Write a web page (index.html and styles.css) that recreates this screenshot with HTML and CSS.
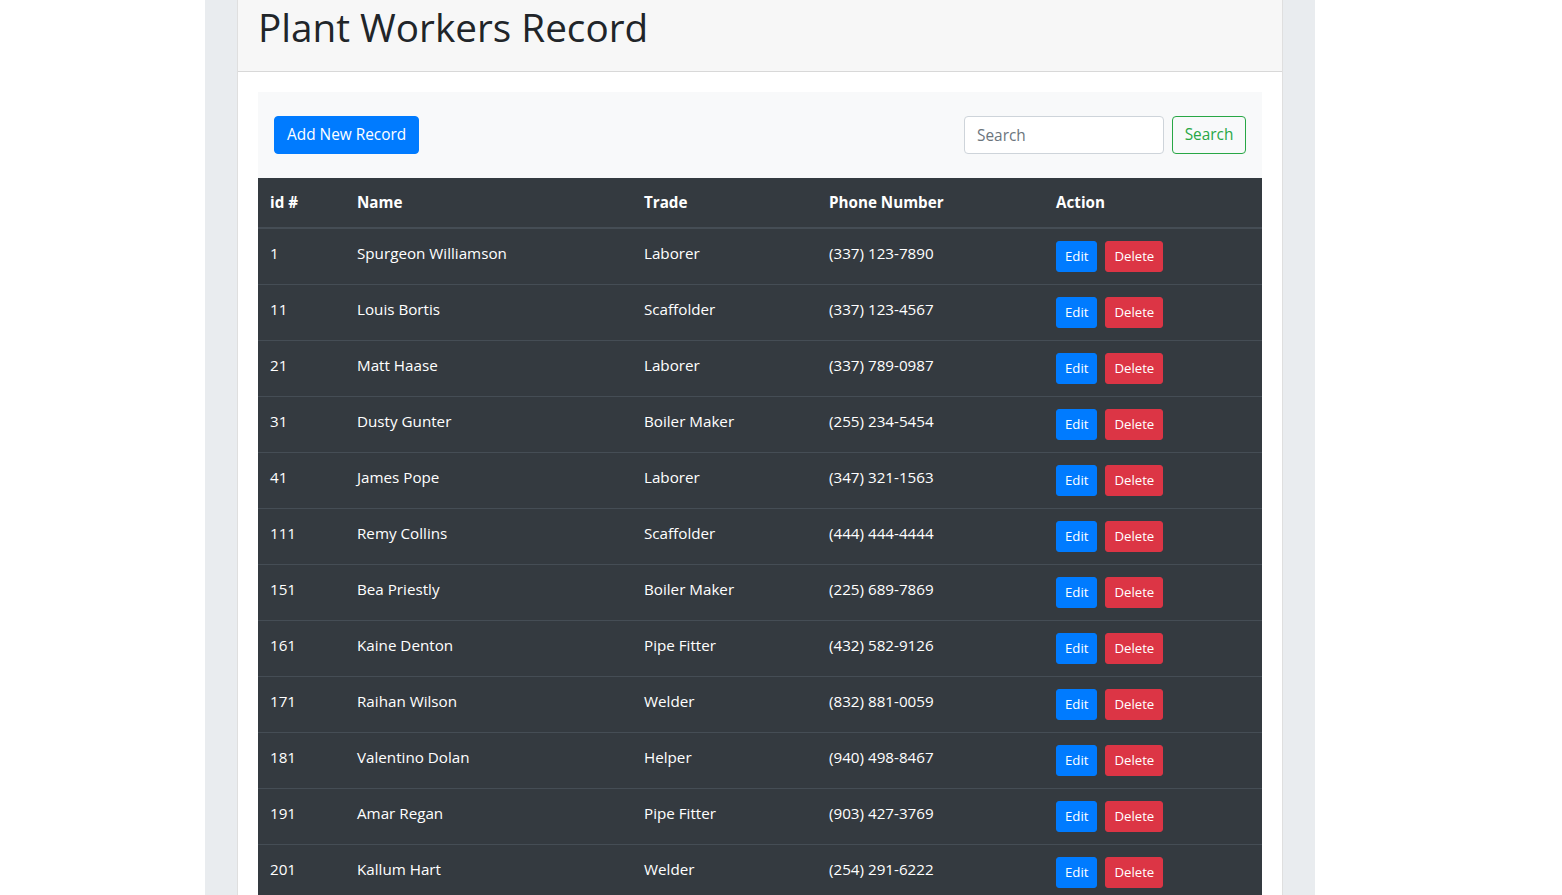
FILE: index.html
```html
<!DOCTYPE html>
<html lang="en">
<head>
<meta charset="utf-8">
<title>Plant Workers Record</title>
<link rel="stylesheet" href="styles.css">
</head>
<body>
<div class="page">
  <div class="jumbo">
    <div class="card">
      <div class="card-header">
        <h1 class="title">Plant Workers Record</h1>
      </div>
      <div class="card-body">
        <nav class="toolbar">
          <button class="btn btn-primary">Add New Record</button>
          <form class="search-form">
            <input class="search-input" type="search" placeholder="Search">
            <button class="btn btn-outline-success" type="button">Search</button>
          </form>
        </nav>
        <table class="table">
          <colgroup>
            <col class="c-id"><col class="c-name"><col class="c-trade"><col class="c-phone"><col class="c-action">
          </colgroup>
          <thead>
            <tr><th>id #</th><th>Name</th><th>Trade</th><th>Phone Number</th><th>Action</th></tr>
          </thead>
          <tbody>
            <tr><td>1</td><td>Spurgeon Williamson</td><td>Laborer</td><td>(337) 123-7890</td><td><div class="actions"><button class="btn-sm edit">Edit</button><button class="btn-sm del">Delete</button></div></td></tr>
            <tr><td>11</td><td>Louis Bortis</td><td>Scaffolder</td><td>(337) 123-4567</td><td><div class="actions"><button class="btn-sm edit">Edit</button><button class="btn-sm del">Delete</button></div></td></tr>
            <tr><td>21</td><td>Matt Haase</td><td>Laborer</td><td>(337) 789-0987</td><td><div class="actions"><button class="btn-sm edit">Edit</button><button class="btn-sm del">Delete</button></div></td></tr>
            <tr><td>31</td><td>Dusty Gunter</td><td>Boiler Maker</td><td>(255) 234-5454</td><td><div class="actions"><button class="btn-sm edit">Edit</button><button class="btn-sm del">Delete</button></div></td></tr>
            <tr><td>41</td><td>James Pope</td><td>Laborer</td><td>(347) 321-1563</td><td><div class="actions"><button class="btn-sm edit">Edit</button><button class="btn-sm del">Delete</button></div></td></tr>
            <tr><td>111</td><td>Remy Collins</td><td>Scaffolder</td><td>(444) 444-4444</td><td><div class="actions"><button class="btn-sm edit">Edit</button><button class="btn-sm del">Delete</button></div></td></tr>
            <tr><td>151</td><td>Bea Priestly</td><td>Boiler Maker</td><td>(225) 689-7869</td><td><div class="actions"><button class="btn-sm edit">Edit</button><button class="btn-sm del">Delete</button></div></td></tr>
            <tr><td>161</td><td>Kaine Denton</td><td>Pipe Fitter</td><td>(432) 582-9126</td><td><div class="actions"><button class="btn-sm edit">Edit</button><button class="btn-sm del">Delete</button></div></td></tr>
            <tr><td>171</td><td>Raihan Wilson</td><td>Welder</td><td>(832) 881-0059</td><td><div class="actions"><button class="btn-sm edit">Edit</button><button class="btn-sm del">Delete</button></div></td></tr>
            <tr><td>181</td><td>Valentino Dolan</td><td>Helper</td><td>(940) 498-8467</td><td><div class="actions"><button class="btn-sm edit">Edit</button><button class="btn-sm del">Delete</button></div></td></tr>
            <tr><td>191</td><td>Amar Regan</td><td>Pipe Fitter</td><td>(903) 427-3769</td><td><div class="actions"><button class="btn-sm edit">Edit</button><button class="btn-sm del">Delete</button></div></td></tr>
            <tr><td>201</td><td>Kallum Hart</td><td>Welder</td><td>(254) 291-6222</td><td><div class="actions"><button class="btn-sm edit">Edit</button><button class="btn-sm del">Delete</button></div></td></tr>
          </tbody>
        </table>
      </div>
    </div>
  </div>
</div>
</body>
</html>
```

FILE: styles.css
```css
* { box-sizing: border-box; }
html, body { margin: 0; padding: 0; background: #fff; }
body {
  font-family: "Open Sans", "Noto Sans", "Liberation Sans", sans-serif;
  font-size: 15.2px;
  line-height: 24px;
  color: #212529;
}
.page {
  padding-left: 205px;
  width: 1315px;
}
.jumbo {
  background: #e9ecef;
  padding: 0 32px 0 32px;
  min-height: 895px;
}
.card {
  background: #fff;
  border: 1px solid rgba(0,0,0,.125);
  border-top: 0;
}
.card-header {
  background: #f7f7f7;
  border-bottom: 1px solid rgba(0,0,0,.125);
  padding: 3px 20px 12px 20px;
}
.title {
  margin: 0 0 8px 0;
  font-size: 38.7px;
  line-height: 48px;
  font-weight: 500;
  color: #212529;
}
.card-body { padding: 20px; }
.toolbar {
  background: #f8f9fa;
  display: flex;
  align-items: center;
  justify-content: space-between;
  padding: 24px 16px;
}
.btn {
  font-family: inherit;
  font-size: 15.4px;
  line-height: 24px;
  padding: 6px 12px;
  border-radius: 4px;
  border: 1px solid transparent;
  cursor: pointer;
}
.btn-primary { background: #007bff; border-color: #007bff; color: #fff; }
.btn-outline-success { background: transparent; border-color: #28a745; color: #28a745; width: 74px; padding: 6px 0; text-align: center; }
.search-form { display: flex; align-items: center; gap: 8px; margin: 0; }
.search-input {
  width: 200px;
  height: 38px;
  font-family: inherit;
  font-size: 15.4px;
  padding: 6px 12px;
  border: 1px solid #ced4da;
  border-radius: 4px;
  color: #495057;
  background: #fff;
}
.search-input::placeholder { color: #6c757d; }
.table {
  width: 100%;
  border-collapse: separate;
  border-spacing: 0;
  background: #343a40;
  color: #fff;
}
.c-id { width: 87px; }
.c-name { width: 287px; }
.c-trade { width: 185px; }
.c-phone { width: 227px; }
.c-action { width: 218px; }
.table th, .table td {
  text-align: left;
  vertical-align: top;
  padding: 12px;
}
.table th {
  font-weight: 700;
  padding-bottom: 13px;
  border-bottom: 2px solid #454d55;
}
.table td { border-top: 1px solid #454d55; }
.table tbody tr:first-child td { border-top: 0; }
.actions { display: flex; gap: 8px; }
.btn-sm {
  font-family: inherit;
  font-size: 13.2px;
  line-height: 21px;
  padding: 4px 8px;
  border: 1px solid transparent;
  border-radius: 3px;
  color: #fff;
  cursor: pointer;
}
.edit { background: #007bff; border-color: #007bff; }
.del { background: #dc3545; border-color: #dc3545; }
```
